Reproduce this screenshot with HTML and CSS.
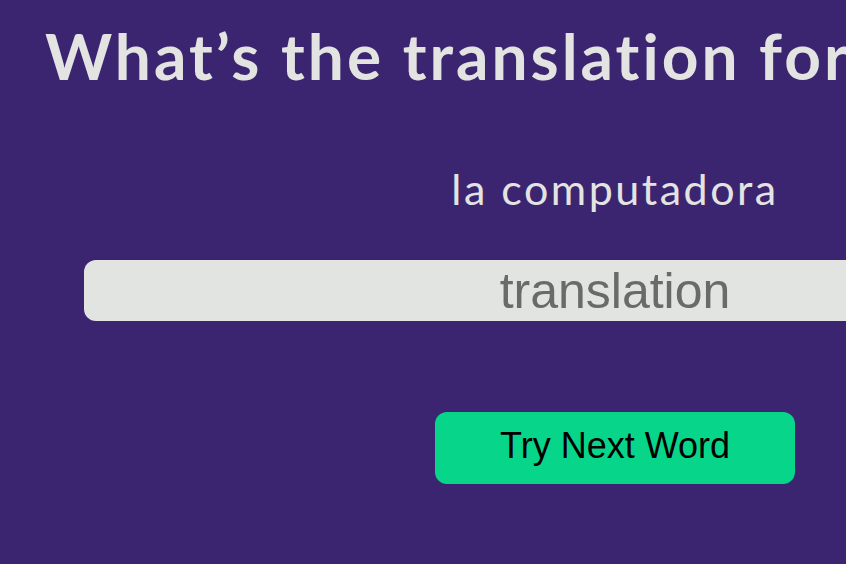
FILE: index.html
```html
<!DOCTYPE html>
<html lang="en">
<head>
<meta charset="utf-8">
<title>Translation quiz</title>
<link rel="stylesheet" href="styles.css">
</head>
<body>
<main class="quiz">
  <h1 class="quiz-title">What’s the translation for this word?</h1>
  <p class="quiz-word">la computadora</p>
  <input class="quiz-input" type="text" placeholder="translation">
  <button class="quiz-button" type="button">Try Next Word</button>
</main>
</body>
</html>
```
FILE: styles.css
```css
html, body {
  margin: 0;
  padding: 0;
  background: #3c2570;
  overflow: hidden;
}
.quiz {
  width: 1230px;
  display: flex;
  flex-direction: column;
  align-items: center;
}
.quiz-title {
  align-self: flex-start;
  margin: 17px 0 0 45px;
  font-family: Lato, "Open Sans", sans-serif;
  font-weight: 700;
  font-size: 64px;
  line-height: 77px;
  color: #e3e4e2;
  white-space: nowrap;
  letter-spacing: 3px;
}
.quiz-word {
  margin: 70px 0 0 0;
  font-family: Lato, "Open Sans", sans-serif;
  font-weight: 400;
  font-size: 43px;
  line-height: 50px;
  color: #e3e4e2;
  letter-spacing: 2.5px;
}
.quiz-input {
  margin-top: 46px;
  width: 1062px;
  height: 61px;
  box-sizing: border-box;
  border: none;
  border-radius: 12px;
  background: #e2e4e1;
  font-family: "Liberation Sans", Arial, sans-serif;
  font-size: 50px;
  text-align: center;
  padding: 0;
  outline: none;
}
.quiz-input::placeholder {
  color: #6a6b68;
}
.quiz-button {
  margin-top: 91px;
  width: 360px;
  height: 72px;
  border: none;
  border-radius: 12px;
  background: #07d68a;
  color: #000;
  font-family: "Liberation Sans", Arial, sans-serif;
  font-size: 36px;
  padding: 0 0 4px 0;
}
```
